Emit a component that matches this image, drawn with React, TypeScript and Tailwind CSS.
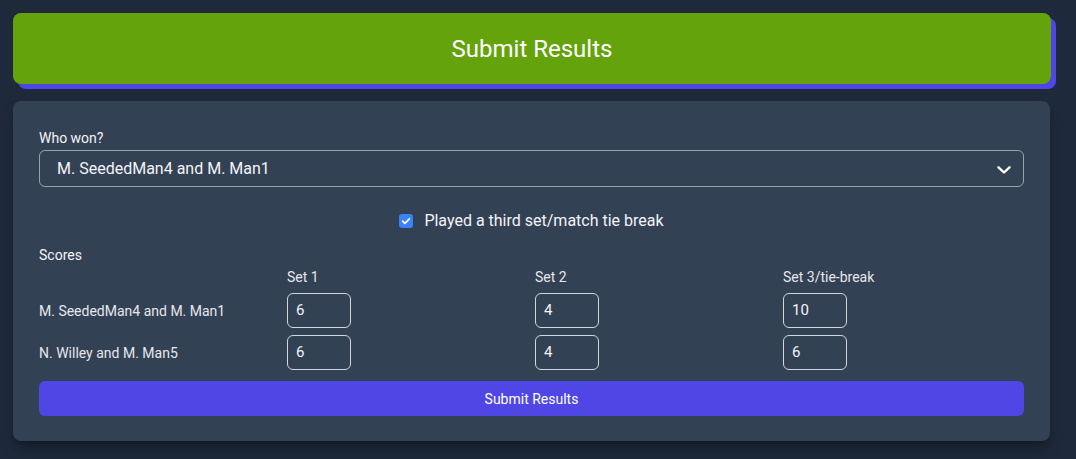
import React from "react";

const rows = [
  { name: "M. SeededMan4 and M. Man1", scores: ["6", "4", "10"] },
  { name: "N. Willey and M. Man5", scores: ["6", "4", "6"] },
];

export default function App() {
  return (
    <div
      className="min-h-[459px] w-full bg-[#1e293b] pt-[13px] pl-[13px] pr-[26px] pb-4 text-gray-100"
      style={{ fontFamily: "Roboto, 'Noto Sans', sans-serif" }}
    >
      <div className="flex h-[71px] w-[1038px] items-center justify-center rounded-lg bg-[#65a30d] shadow-[5px_5px_0_0_#4f46e5]">
        <span className="text-[24px] text-white">Submit Results</span>
      </div>
      <div className="mt-[17px] w-[1037px] rounded-lg bg-[#334155] px-[26px] pt-[27px] pb-[25px] shadow-lg shadow-black/30">
        <label className="block text-sm leading-5 text-gray-100">Who won?</label>
        <div className="relative mt-[2px] flex h-[37px] items-center rounded-md border border-gray-400 pl-[17px] pr-4">
          <span className="text-base text-gray-100">M. SeededMan4 and M. Man1</span>
          <svg
            className="absolute right-[12px] top-[15px]"
            width="14"
            height="8"
            viewBox="0 0 14 8"
            fill="none"
          >
            <path d="M1.5 1.3l5.5 5.2 5.5-5.2" stroke="white" strokeWidth="2.4" strokeLinecap="round" strokeLinejoin="round" />
          </svg>
        </div>
        <div className="mt-[22px] flex items-center justify-center gap-[11px]">
          <span className="flex h-[14px] w-[14px] items-center justify-center rounded-[3px] bg-[#3b82f6]">
            <svg width="10" height="10" viewBox="0 0 12 12" fill="none">
              <path d="M2 6.2l2.7 2.7L10 3.4" stroke="white" strokeWidth="2" strokeLinecap="round" strokeLinejoin="round" />
            </svg>
          </span>
          <span className="text-base text-gray-100">Played a third set/match tie break</span>
        </div>
        <div className="mt-[12px] text-sm leading-5 text-gray-100">Scores</div>
        <div className="mt-[2px] grid grid-cols-4 gap-x-[7px] text-sm">
          <div />
          <div className="leading-5 text-gray-200">Set 1</div>
          <div className="leading-5 text-gray-200">Set 2</div>
          <div className="leading-5 text-gray-200">Set 3/tie-break</div>
        </div>
        <div className="mt-[6px] flex flex-col gap-[7px]">
          {rows.map((r) => (
            <div key={r.name} className="grid grid-cols-4 items-center gap-x-[7px]">
              <div className="text-sm text-gray-200">{r.name}</div>
              {r.scores.map((s, i) => (
                <div key={i}>
                  <div className="flex h-[35px] w-[64px] items-center rounded-md border border-gray-300 pl-[8px] text-[15px] text-gray-100">
                    {s}
                  </div>
                </div>
              ))}
            </div>
          ))}
        </div>
        <button className="mt-[11px] flex h-[35px] w-full items-center justify-center rounded-md bg-[#4f46e5] text-sm text-white">
          Submit Results
        </button>
      </div>
    </div>
  );
}
